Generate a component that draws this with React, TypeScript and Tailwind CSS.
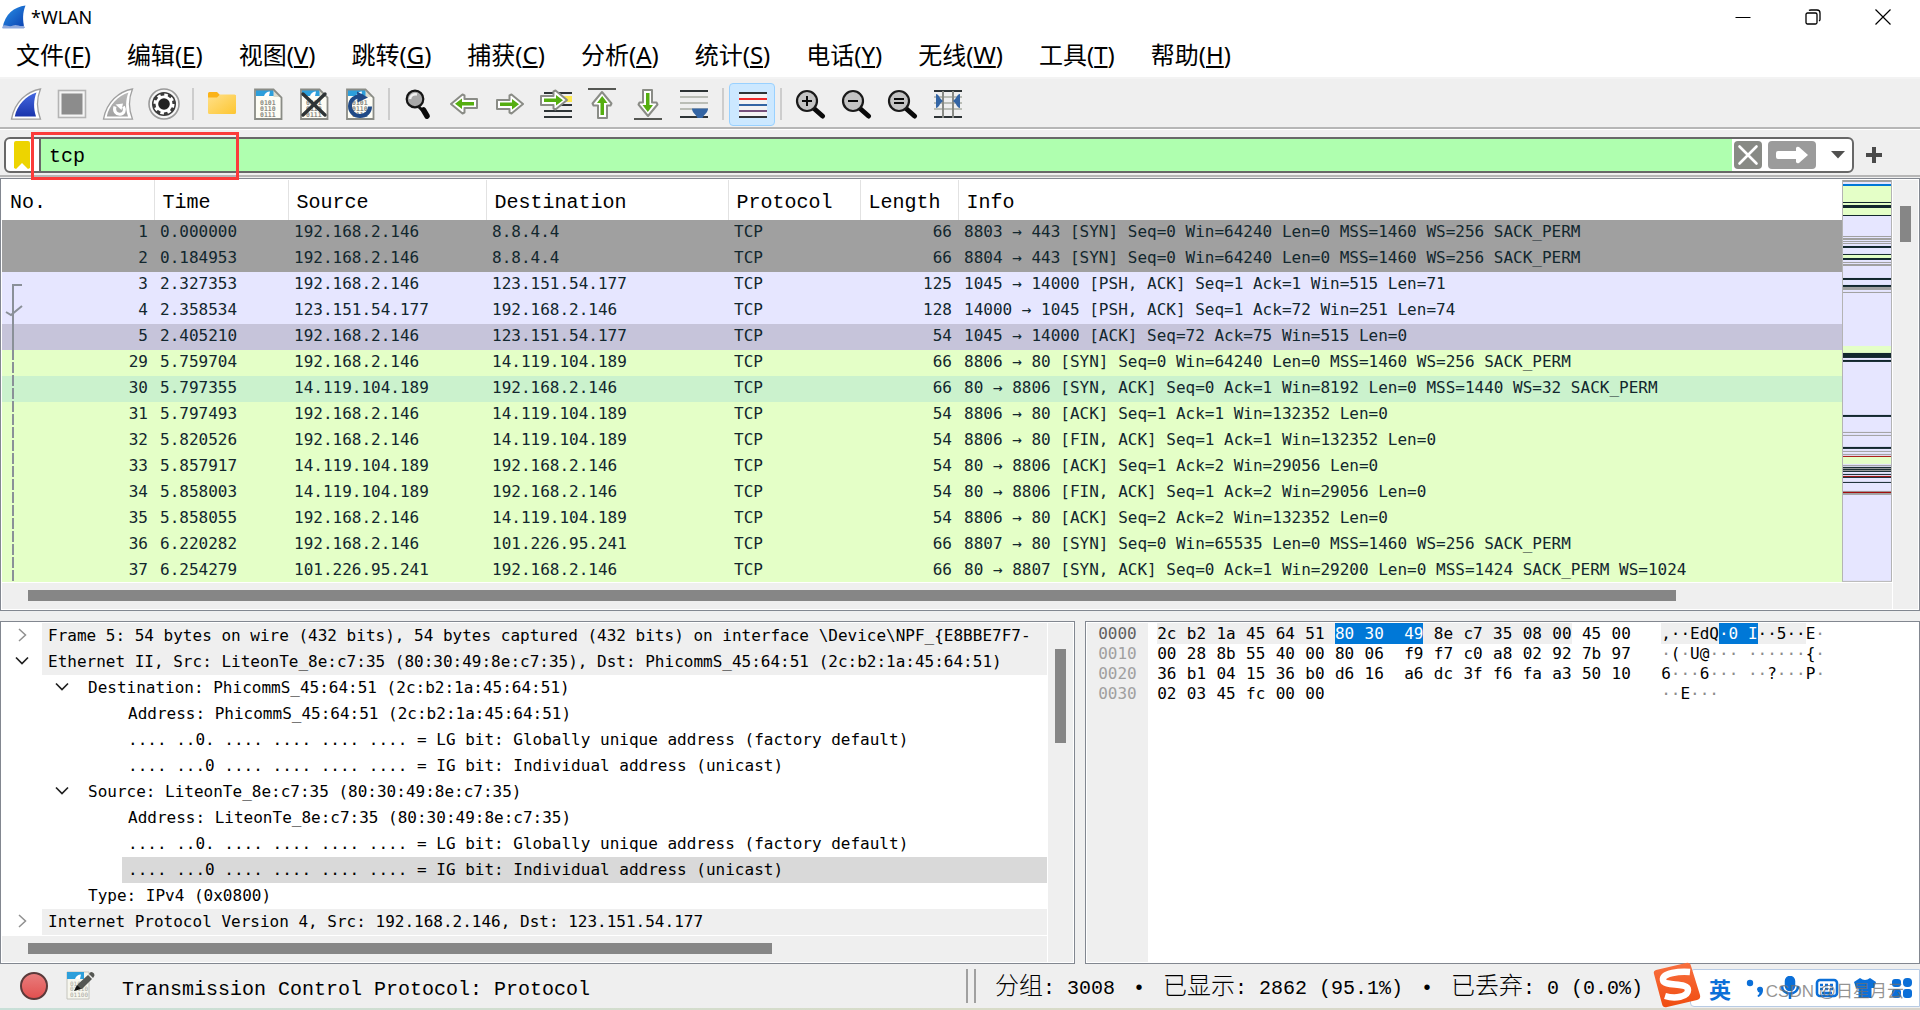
import React from 'react'

interface IPacket {
  no: number
  time: string
  src: string
  dst: string
  len: number
  info: string
  bg: string
}

interface IDetail {
  level: number
  text: string
  arrow?: 'open' | 'closed'
  bg?: string
}

const GRAY = 'bg-[#a0a0a0]'
const UDP = 'bg-[#e6e6ff]'
const GREEN = 'bg-[#e4ffc7]'

const menus = [
  ['文件', 'F'],
  ['编辑', 'E'],
  ['视图', 'V'],
  ['跳转', 'G'],
  ['捕获', 'C'],
  ['分析', 'A'],
  ['统计', 'S'],
  ['电话', 'Y'],
  ['无线', 'W'],
  ['工具', 'T'],
  ['帮助', 'H'],
]

const packets: IPacket[] = [
  { no: 1, time: '0.000000', src: '192.168.2.146', dst: '8.8.4.4', len: 66, info: '8803 → 443 [SYN] Seq=0 Win=64240 Len=0 MSS=1460 WS=256 SACK_PERM', bg: GRAY },
  { no: 2, time: '0.184953', src: '192.168.2.146', dst: '8.8.4.4', len: 66, info: '8804 → 443 [SYN] Seq=0 Win=64240 Len=0 MSS=1460 WS=256 SACK_PERM', bg: GRAY },
  { no: 3, time: '2.327353', src: '192.168.2.146', dst: '123.151.54.177', len: 125, info: '1045 → 14000 [PSH, ACK] Seq=1 Ack=1 Win=515 Len=71', bg: UDP },
  { no: 4, time: '2.358534', src: '123.151.54.177', dst: '192.168.2.146', len: 128, info: '14000 → 1045 [PSH, ACK] Seq=1 Ack=72 Win=251 Len=74', bg: UDP },
  { no: 5, time: '2.405210', src: '192.168.2.146', dst: '123.151.54.177', len: 54, info: '1045 → 14000 [ACK] Seq=72 Ack=75 Win=515 Len=0', bg: 'bg-[#c6c4da]' },
  { no: 29, time: '5.759704', src: '192.168.2.146', dst: '14.119.104.189', len: 66, info: '8806 → 80 [SYN] Seq=0 Win=64240 Len=0 MSS=1460 WS=256 SACK_PERM', bg: GREEN },
  { no: 30, time: '5.797355', src: '14.119.104.189', dst: '192.168.2.146', len: 66, info: '80 → 8806 [SYN, ACK] Seq=0 Ack=1 Win=8192 Len=0 MSS=1440 WS=32 SACK_PERM', bg: 'bg-[#cbf2cd]' },
  { no: 31, time: '5.797493', src: '192.168.2.146', dst: '14.119.104.189', len: 54, info: '8806 → 80 [ACK] Seq=1 Ack=1 Win=132352 Len=0', bg: GREEN },
  { no: 32, time: '5.820526', src: '192.168.2.146', dst: '14.119.104.189', len: 54, info: '8806 → 80 [FIN, ACK] Seq=1 Ack=1 Win=132352 Len=0', bg: GREEN },
  { no: 33, time: '5.857917', src: '14.119.104.189', dst: '192.168.2.146', len: 54, info: '80 → 8806 [ACK] Seq=1 Ack=2 Win=29056 Len=0', bg: GREEN },
  { no: 34, time: '5.858003', src: '14.119.104.189', dst: '192.168.2.146', len: 54, info: '80 → 8806 [FIN, ACK] Seq=1 Ack=2 Win=29056 Len=0', bg: GREEN },
  { no: 35, time: '5.858055', src: '192.168.2.146', dst: '14.119.104.189', len: 54, info: '8806 → 80 [ACK] Seq=2 Ack=2 Win=132352 Len=0', bg: GREEN },
  { no: 36, time: '6.220282', src: '192.168.2.146', dst: '101.226.95.241', len: 66, info: '8807 → 80 [SYN] Seq=0 Win=65535 Len=0 MSS=1460 WS=256 SACK_PERM', bg: GREEN },
  { no: 37, time: '6.254279', src: '101.226.95.241', dst: '192.168.2.146', len: 66, info: '80 → 8807 [SYN, ACK] Seq=0 Ack=1 Win=29200 Len=0 MSS=1424 SACK_PERM WS=1024', bg: GREEN },
]

const details: IDetail[] = [
  { level: 0, arrow: 'closed', bg: 'bg-[#efefef]', text: 'Frame 5: 54 bytes on wire (432 bits), 54 bytes captured (432 bits) on interface \\Device\\NPF_{E8BBE7F7-' },
  { level: 0, arrow: 'open', bg: 'bg-[#efefef]', text: 'Ethernet II, Src: LiteonTe_8e:c7:35 (80:30:49:8e:c7:35), Dst: PhicommS_45:64:51 (2c:b2:1a:45:64:51)' },
  { level: 1, arrow: 'open', text: 'Destination: PhicommS_45:64:51 (2c:b2:1a:45:64:51)' },
  { level: 2, text: 'Address: PhicommS_45:64:51 (2c:b2:1a:45:64:51)' },
  { level: 2, text: '.... ..0. .... .... .... .... = LG bit: Globally unique address (factory default)' },
  { level: 2, text: '.... ...0 .... .... .... .... = IG bit: Individual address (unicast)' },
  { level: 1, arrow: 'open', text: 'Source: LiteonTe_8e:c7:35 (80:30:49:8e:c7:35)' },
  { level: 2, text: 'Address: LiteonTe_8e:c7:35 (80:30:49:8e:c7:35)' },
  { level: 2, text: '.... ..0. .... .... .... .... = LG bit: Globally unique address (factory default)' },
  { level: 2, bg: 'bg-[#d9d9d9]', text: '.... ...0 .... .... .... .... = IG bit: Individual address (unicast)' },
  { level: 1, text: 'Type: IPv4 (0x0800)' },
  { level: 0, arrow: 'closed', bg: 'bg-[#efefef]', text: 'Internet Protocol Version 4, Src: 192.168.2.146, Dst: 123.151.54.177' },
]

const hexRows = [
  { offset: '0000', bytes: '2c b2 1a 45 64 51 80 30 49 8e c7 35 08 00 45 00', ascii: ',··EdQ·0 I··5··E·' },
  { offset: '0010', bytes: '00 28 8b 55 40 00 80 06 f9 f7 c0 a8 02 92 7b 97', ascii: '·(·U@··· ······{·' },
  { offset: '0020', bytes: '36 b1 04 15 36 b0 d6 16 a6 dc 3f f6 fa a3 50 10', ascii: '6···6··· ··?···P·' },
  { offset: '0030', bytes: '02 03 45 fc 00 00', ascii: '··E···' },
]

// [y, height, color]
const bands: [number, number, string][] = [
  [0, 2, '#a0a0a0'], [4, 2, '#0078d7'], [6, 30, '#e4ffc7'], [22, 1, '#12272e'], [25, 3, '#12272e'], [35, 1, '#12272e'],
  [56, 1, '#a0a0a0'], [58, 2, '#a0a0a0'], [61, 1, '#a0a0a0'], [63, 1, '#a0a0a0'], [66, 2, '#12272e'], [74, 1, '#12272e'],
  [75, 3, '#e4ffc7'], [78, 2, '#12272e'], [82, 1, '#a0a0a0'], [84, 2, '#a0a0a0'], [98, 2, '#12272e'], [105, 2, '#12272e'],
  [107, 3, '#a0a0a0'], [112, 1, '#a0a0a0'], [166, 7, '#e4ffc7'], [173, 5, '#12272e'], [180, 2, '#12272e'],
  [235, 2, '#12272e'], [252, 1, '#a0a0a0'], [255, 1, '#a0a0a0'], [267, 2, '#12272e'], [271, 1, '#a0a0a0'], [274, 1, '#a0a0a0'],
  [276, 1, '#a40000'], [277, 7, '#e4ffc7'], [285, 1, '#a0a0a0'], [287, 5, '#a0a0a0'], [287, 1, '#12272e'], [289, 1, '#12272e'],
  [291, 1, '#12272e'], [294, 1, '#12272e'], [296, 1, '#a40000'], [297, 1, '#12272e'], [302, 1, '#12272e'],
  [311, 4, '#a0a0a0'], [312, 1, '#a40000'],
]

const Icon = ({ children }: { children: React.ReactNode }) => (
  <svg viewBox="0 0 32 32" className="h-8 w-8" fill="none" aria-hidden="true">
    {children}
  </svg>
)

const Fin = ({ from, to }: { from: string; to: string }) => (
  <>
    <linearGradient id={'fin' + from.slice(1)} x1="0" y1="0" x2="0" y2="1">
      <stop offset="0" stopColor={from} />
      <stop offset="1" stopColor={to} />
    </linearGradient>
    <path d="M30.500 1C17 3.500 4.500 14 1.500 31.200H30.500C26.500 21 26.800 10 30.500 1Z" fill="#fff" stroke="#a0a0a0" strokeWidth="1.300" />
    <path d="M26.500 4.500C16 8 7 17 4.800 28.500H26C23.300 20 23.500 12 26.500 4.500Z" fill={`url(#fin${from.slice(1)})`} />
  </>
)

const Doc = ({ children }: { children?: React.ReactNode }) => (
  <>
    <path d="M3 1.500H22L29.500 9V31H3Z" fill="#fdfdf5" />
    <path d="M4 2H21L25 8H4Z" fill="#2d9fdb" />
    <path d="M12 8C13 5 15 3.500 18 3.500L17 8Z" fill="#fff" />
    <path d="M21.500 2V9H29Z" fill="#dcdccf" />
    <g fill="#8a8a82" fontFamily="'DejaVu Sans Mono', monospace" fontSize="6.500" fontWeight="bold">
      <text x="8" y="16.500">0101</text>
      <text x="8" y="22.500">0110</text>
      <text x="8" y="28.500">0111</text>
    </g>
    <path d="M3 1.500H21.500L29.500 9.500V31H3Z" stroke="#8a8c86" strokeWidth="1.800" />
    {children}
  </>
)

const Lens = ({ children }: { children?: React.ReactNode }) => (
  <>
    <path d="M20 20.500L28.500 28" stroke="#0a0a0a" strokeWidth="5" strokeLinecap="round" />
    <circle cx="13" cy="13" r="10" fill="#c4c4c4" stroke="#1a1a1a" strokeWidth="2.200" />
    <g stroke="#0a0a0a" strokeWidth="2">{children}</g>
  </>
)

// right pointing arrow, the other directions are rotations of it
const arrowBody = (
  <>
    <path d="M3 12H15.500V7.500L17.500 6.500L29 16L17.500 25.500L15.500 24.500V21H3Z" fill="#fff" stroke="#8a8c86" strokeWidth="2" strokeLinejoin="round" />
    <path d="M6 14.500H18V11L25 16.200L18 21.500V18H6Z" fill="#55ae10" />
  </>
)

const lines = (rows: [number, string][]) =>
  rows.map(([y, color]) => <path key={y} d={`M2 ${y}H30`} stroke={color} strokeWidth="2" />)

const tools: { name: string; active?: boolean; icon: React.ReactNode }[][] = [
  [
    { name: '开始捕获', icon: <Fin from="#4468e0" to="#1a34ac" /> },
    {
      name: '停止捕获',
      icon: (
        <>
          <rect x="2.500" y="2.500" width="27" height="27" fill="#f4f4f4" stroke="#b4b4b4" strokeWidth="1.600" />
          <rect x="5.500" y="5.500" width="21" height="21" fill="#8c8c8c" />
        </>
      ),
    },
    {
      name: '重新开始捕获',
      icon: (
        <>
          <Fin from="#b9b9b9" to="#a2a2a2" />
          <path d="M13 18.500C11.500 23 14 26.500 18 26.300C22 26 23.500 22 21.500 18.500" stroke="#fff" strokeWidth="3" />
          <path d="M13.500 16.500L21 15.500L19.500 22Z" fill="#fff" />
        </>
      ),
    },
    {
      name: '捕获选项',
      icon: (
        <>
          <circle cx="16" cy="16" r="15" fill="#f6f6f6" stroke="#9a9a9a" strokeWidth="1.600" />
          <circle cx="16" cy="16" r="12" fill="#3a3a3a" />
          <circle cx="16" cy="16" r="8.500" fill="#fff" />
          <circle cx="16" cy="16" r="9" stroke="#fff" strokeWidth="3" strokeDasharray="3.500 3.570" />
          <circle cx="16" cy="16" r="5.800" fill="#222" />
        </>
      ),
    },
  ],
  [
    {
      name: '打开',
      icon: (
        <>
          <linearGradient id="folder" x1="0" y1="0" x2="1" y2="1">
            <stop offset="0" stopColor="#ffe08a" />
            <stop offset="1" stopColor="#fdc631" />
          </linearGradient>
          <path d="M2 5.500Q2 4 3.500 4H11L14 7H28.500Q30 7 30 8.500V14H2Z" fill="#fbb318" />
          <path d="M2 9.500H11L14 6.500H28.500Q30 6.500 30 8V24.500Q30 26 28.500 26H3.500Q2 26 2 24.500Z" fill="url(#folder)" />
        </>
      ),
    },
    { name: '保存', icon: <Doc /> },
    { name: '关闭文件', icon: <Doc><path d="M5 6L27 27M27 6L5 27" stroke="#2e3436" strokeWidth="3.400" strokeLinecap="round" /></Doc> },
    {
      name: '重新加载',
      icon: (
        <Doc>
          <path d="M19 8.500C11 7 6 12 6 18C6 24 10.500 28 16 28C22 28 26 24 26 18.500" stroke="#204a87" strokeWidth="4" />
          <path d="M13 3.500L24 9.500L13.500 14.500Z" fill="#204a87" />
        </Doc>
      ),
    },
  ],
  [
    {
      name: '查找',
      icon: (
        <>
          <path d="M17 19L20 22" stroke="#111" strokeWidth="3" />
          <path d="M21.500 22L25 28" stroke="#0a0a0a" strokeWidth="5.500" strokeLinecap="round" />
          <circle cx="13" cy="11" r="8.300" fill="#a8a8a8" stroke="#151515" strokeWidth="2.200" />
          <path d="M8 11C8.500 7.500 11.500 5.500 15 6.500" stroke="#f0f0f0" strokeWidth="2.500" />
        </>
      ),
    },
    { name: '上一分组', icon: <g transform="rotate(180 16 16)">{arrowBody}</g> },
    { name: '下一分组', icon: arrowBody },
    {
      name: '转到分组',
      icon: (
        <>
          <rect x="23" y="8" width="9" height="6" fill="#fce94f" />
          <g transform="translate(2 0)">{lines([[5, '#2e3436'], [17, '#2e3436'], [23, '#2e3436'], [29, '#2e3436']])}</g>
          <g transform="translate(-2 -4)">{arrowBody}</g>
        </>
      ),
    },
    {
      name: '首个分组',
      icon: (
        <>
          {lines([[1, '#555753']])}
          <g transform="translate(0 1) rotate(-90 16 16)">{arrowBody}</g>
        </>
      ),
    },
    {
      name: '最新分组',
      icon: (
        <>
          {lines([[31, '#555753']])}
          <g transform="translate(0 -1) rotate(90 16 16)">{arrowBody}</g>
        </>
      ),
    },
    {
      name: '自动滚动',
      icon: (
        <>
          {lines([[3, '#2e3436'], [9, '#babdb6'], [15, '#babdb6'], [21, '#babdb6'], [29, '#2e3436']])}
          <path d="M14 20.500H30C30 25 26 26 24.500 30H19.500C18 26 14 25 14 20.500Z" fill="#3465a4" />
        </>
      ),
    },
  ],
  [
    {
      name: '着色',
      active: true,
      icon: (
        <>
          <rect x="3" y="4" width="28" height="26" fill="#f3f3f3" />
          <g transform="translate(1 0)">{lines([[5, '#2e3436'], [11, '#ef2929'], [17, '#3465a4'], [23, '#75507b'], [29, '#2e3436']])}</g>
        </>
      ),
    },
  ],
  [
    { name: '放大', icon: <Lens><path d="M8 13H18M13 8V18" /></Lens> },
    { name: '缩小', icon: <Lens><path d="M8 13H18" /></Lens> },
    { name: '正常大小', icon: <Lens><path d="M8 11H18M8 15H18" /></Lens> },
    {
      name: '调整列宽',
      icon: (
        <>
          {lines([[3, '#2e3436'], [9, '#babdb6'], [15, '#babdb6'], [21, '#babdb6'], [29, '#2e3436']])}
          <path d="M11 3V30M21 3V30" stroke="#888a85" strokeWidth="2" />
          <path d="M4 6C7 6 7 10 11 13C7 16 7 20 4 20ZM28 6C25 6 25 10 21 13C25 16 25 20 28 20Z" fill="#3465a4" />
        </>
      ),
    },
  ],
]

function TitleBar() {
  return (
    <header className="flex h-[34px] shrink-0 items-center bg-white pr-0.5 pl-0.5">
      <svg viewBox="0 0 24 24" className="h-6 w-6" aria-hidden="true">
        <linearGradient id="logo" x1="0" y1="0" x2="1" y2="1">
          <stop offset="0" stopColor="#2a93e8" />
          <stop offset="1" stopColor="#0a3fb0" />
        </linearGradient>
        <path d="M23.500 0.500C12 2 3 9 0.500 23H22.500C20.500 15 20.500 8 23.500 0.500Z" fill="url(#logo)" />
        <path d="M1 20.500C5 19.500 7 22.500 11 20.500S18 22.500 22 20.500V23.500H0.500Z" fill="#8fa9dd" />
      </svg>
      <h1 className="ml-[5px] text-lg leading-6">*WLAN</h1>
      <div className="ml-auto flex">
        <button aria-label="最小化" className="flex h-8 w-[70px] items-center justify-center">
          <svg viewBox="0 0 16 16" className="h-4 w-4" stroke="#000"><path d="M0.500 8.500H15.500" /></svg>
        </button>
        <button aria-label="还原" className="flex h-8 w-[70px] items-center justify-center">
          <svg viewBox="0 0 16 16" className="h-4 w-4" fill="none" stroke="#000" strokeWidth="1.300">
            <rect x="1" y="4" width="11" height="11" rx="1.500" />
            <path d="M4 1.500C4.500 1 5 1 6 1H12Q15 1 15 4V10.500Q15 11.500 14 12" />
          </svg>
        </button>
        <button aria-label="关闭" className="flex h-8 w-[70px] items-center justify-center">
          <svg viewBox="0 0 16 16" className="h-4 w-4" stroke="#000" strokeWidth="1.200"><path d="M0.500 0.500L15.500 15.500M15.500 0.500L0.500 15.500" /></svg>
        </button>
      </div>
    </header>
  )
}

function ToolBar() {
  return (
    <div className="flex h-[50px] shrink-0 items-center border-b-2 border-[#b6b6b6] pt-0.5 pl-[3px]">
      {tools.map((group, i) => (
        <React.Fragment key={i}>
          {i > 0 && <div className="flex h-8 w-3 justify-center"><div className="w-0.5 bg-[#cdcdcd]" /></div>}
          {group.map(({ name, active, icon }) => (
            <button
              key={name}
              aria-label={name}
              className={`flex h-[43px] w-[46px] items-center justify-center ${active ? 'rounded-sm border border-[#99d1ff] bg-[#cce8ff]' : ''}`}
            >
              <Icon>{icon}</Icon>
            </button>
          ))}
        </React.Fragment>
      ))}
    </div>
  )
}

function FilterBar() {
  return (
    <div className="relative flex h-12 shrink-0 items-center border-t border-b-2 border-t-white border-b-[#b6b6b6] pt-1 pr-[66px] pl-1">
      <div className="flex h-9 flex-1 items-center overflow-hidden rounded-md border-2 border-[#686868] bg-white">
        <button aria-label="书签" className="flex h-full w-[35px] items-center border-r-2 border-[#686868] pl-2">
          <svg viewBox="0 0 16 28" className="h-7 w-4"><path d="M0 2Q0 0 2 0H14Q16 0 16 2V27L14 28L8 22L2 28L0 27Z" fill="#edd400" /></svg>
        </button>
        <input
          aria-label="显示过滤器"
          defaultValue="tcp"
          className="h-full min-w-0 flex-1 bg-[#afffaf] px-2 pt-1 font-['Liberation_Mono','Noto_Sans_CJK_SC',monospace] text-xl outline-none"
        />
        <button aria-label="清除" className="ml-0.5 flex h-7 w-7 items-center justify-center rounded-sm bg-[#888a85]">
          <svg viewBox="0 0 28 28" className="h-7 w-7" stroke="#fff" strokeWidth="2.600" strokeLinecap="round"><path d="M5.500 5.500L22.500 22.500M22.500 5.500L5.500 22.500" /></svg>
        </button>
        <button aria-label="应用" className="ml-1.5 flex h-7 w-12 items-center justify-center rounded-sm bg-[#9b9b9b]">
          <svg viewBox="0 0 32 18" className="h-[18px] w-8" fill="#fff"><path d="M2 5H20V2Q21 0 23 1L32 9L23 17Q21 18 20 16V13H2Q0 13 0 11V7Q0 5 2 5Z" /></svg>
        </button>
        <button aria-label="历史" className="flex h-full w-9 items-center justify-center pl-2">
          <svg viewBox="0 0 14 8" className="h-2 w-3.5" fill="#50504f"><path d="M0 0H14L7 7.500Z" /></svg>
        </button>
      </div>
      <button aria-label="添加" className="absolute right-[38px] flex h-9 w-4 items-center justify-center">
        <svg viewBox="0 0 16 16" className="h-4 w-4" fill="#4a4a4a"><path d="M6 0H10V6H16V10H10V16H6V10H0V6H6Z" /></svg>
      </button>
      <div className="pointer-events-none absolute top-0.5 left-[31px] z-10 h-12 w-52 border-3 border-[#fb3b3a]" />
    </div>
  )
}

function PacketList() {
  return (
    <section className="flex min-h-0 flex-5 border border-[#828790] bg-white p-px">
      <div className="flex min-w-0 flex-1 flex-col">
        <div className="flex min-h-0 flex-1">
          <div className="relative min-w-0 flex-1 overflow-hidden">
            <table className="w-full table-fixed border-collapse text-left whitespace-pre text-[#12272e]">
              <thead>
                <tr className="h-10 font-['Liberation_Mono',monospace] text-xl text-black *:border-r *:border-[#e2e2e2] *:px-2 *:pt-1.5 *:pb-0 *:font-normal *:last:border-0">
                  <th className="w-[152px]">No.</th>
                  <th className="w-[134px]">Time</th>
                  <th className="w-[198px]">Source</th>
                  <th className="w-[242px]">Destination</th>
                  <th className="w-[132px]">Protocol</th>
                  <th className="w-[98px]">Length</th>
                  <th>Info</th>
                </tr>
              </thead>
              <tbody className="font-['DejaVu_Sans_Mono',monospace] text-base">
                {packets.map(({ no, time, src, dst, len, info, bg }) => (
                  <tr key={no} className={`h-[26px] *:px-1.5 *:pt-0 *:pb-0.5 *:leading-6 ${bg}`}>
                    <td className="text-right">{no}</td>
                    <td>{time}</td>
                    <td>{src}</td>
                    <td>{dst}</td>
                    <td>TCP</td>
                    <td className="text-right">{len}</td>
                    <td className="overflow-hidden">{info}</td>
                  </tr>
                ))}
              </tbody>
            </table>
            {/* conversation marks of the selected packet */}
            <svg viewBox="0 0 24 404" className="pointer-events-none absolute top-0 left-0 h-[404px] w-6" fill="none" stroke="#8a9098" strokeWidth="2">
              <path d="M20 105H11V170" />
              <path d="M4 132L9 135L20 126" />
              <path d="M11 169V404" strokeDasharray="11 2" />
            </svg>
          </div>
          <svg viewBox="0 0 50 402" preserveAspectRatio="none" className="h-full w-[50px]" aria-hidden="true">
            <rect width="50" height="402" fill="#b4b4b4" />
            <rect x="1" width="48" height="401" fill="#e6e6ff" />
            {bands.map(([y, h, color], i) => (
              <rect key={i} x="1" y={y} width="48" height={h} fill={color} />
            ))}
          </svg>
        </div>
        <div className="mt-px h-[26px] bg-[#efefef] pt-[7px] pr-[216px] pl-[26px]">
          <div className="h-[11px] bg-[#868686]" />
        </div>
      </div>
      <div className="ml-px w-[25px] bg-[#efefef] pt-[26px] pl-[7px]">
        <div className="h-9 w-[11px] bg-[#868686]" />
      </div>
    </section>
  )
}

function DetailPane() {
  return (
    <section className="flex w-[56%] border border-[#828790] bg-white p-px">
      <div className="flex min-w-0 flex-1 flex-col">
        <ul className="min-h-0 flex-1 overflow-hidden font-['DejaVu_Sans_Mono',monospace] text-base whitespace-pre">
          {details.map(({ level, text, arrow, bg = '' }, i) => (
            <li key={i} className={`flex h-[26px] ${['', 'pl-10', 'pl-20'][level]}`}>
              <button aria-label="展开" disabled={!arrow} className="flex w-10 shrink-0 items-center justify-center pb-px">
                {arrow === 'closed' && <svg viewBox="0 0 14 14" className="h-3.5 w-3.5" fill="none" stroke="#909090" strokeWidth="1.500"><path d="M4 1L10.500 7L4 13" /></svg>}
                {arrow === 'open' && <svg viewBox="0 0 14 14" className="h-3.5 w-3.5" fill="none" stroke="#202020" strokeWidth="1.700"><path d="M1 3.500L7 9.500L13 3.500" /></svg>}
              </button>
              <span className={`min-w-0 flex-1 overflow-hidden pl-1.5 leading-[26px] ${bg}`}>{text}</span>
            </li>
          ))}
        </ul>
        <div className="mt-px h-[26px] bg-[#efefef] pt-[7px] pl-[26px]">
          <div className="h-[11px] w-[73%] bg-[#868686]" />
        </div>
      </div>
      <div className="ml-px w-[25px] bg-[#efefef] pt-[26px] pl-[7px]">
        <div className="h-[94px] w-[11px] bg-[#868686]" />
      </div>
    </section>
  )
}

// bytes 6-8 are selected, 0-13 belong to the Ethernet header
function Byte({ value, row, index }: { value: string; row: number; index: number }) {
  if (row > 0 || index > 13) return <span>{value}</span>
  if (index === 6 || index === 7) return <span className="bg-[#0078d7] text-white">{value}</span>
  if (index === 8) return <span className="bg-[#efefef]"><span className="inline-block bg-[#0078d7] text-white">{value}</span></span>
  if (index === 13) return <span><span className="inline-block bg-[#efefef]">{value}</span></span>
  return <span className="bg-[#efefef]">{value}</span>
}

const dots = (s: string) =>
  s.split(/(·+)/).map((part, i) => (part[0] === '·' ? <span key={i} className="text-[#8c8c8c]">{part}</span> : part))

function BytesPane() {
  return (
    <section className="flex min-w-0 flex-1 border border-[#828790] bg-white p-px font-['DejaVu_Sans_Mono',monospace] text-base leading-5 whitespace-pre">
      <div className="w-[61px] bg-[#efefef] pt-px pl-[11px] text-[#a0a0a0]">
        {hexRows.map((r, i) => (
          <div key={r.offset} className={i === 0 ? 'text-[#606060]' : ''}>{r.offset}</div>
        ))}
      </div>
      <div className="pl-[9px]">
        {hexRows.map((r, row) => {
          const bytes = r.bytes.split(' ')
          return (
            <div key={r.offset} className={`flex ${row === 0 ? 'h-[21px] leading-[21px]' : 'h-5'}`}>
              <div className="grid w-[237px] grid-cols-8">
                {bytes.slice(0, 8).map((b, i) => <Byte key={i} value={b} row={row} index={i} />)}
              </div>
              <div className={`w-2.5 ${row === 0 ? 'bg-[#0078d7]' : ''}`} />
              <div className="grid w-[237px] grid-cols-8">
                {bytes.slice(8).map((b, i) => <Byte key={i} value={b} row={row} index={i + 8} />)}
              </div>
            </div>
          )
        })}
      </div>
      <div className="pl-5">
        <div className="flex h-[21px] leading-[21px]">
          <span className="bg-[#efefef]">,··EdQ</span>
          <span className="bg-[#0078d7] text-white">·0 I</span>
          <span className="bg-[#efefef]">··5··</span>
          <span>E</span>
          <span className="text-[#8c8c8c]">·</span>
        </div>
        {hexRows.slice(1).map((r) => (
          <div key={r.offset}>{dots(r.ascii)}</div>
        ))}
      </div>
    </section>
  )
}

const Zh = ({ children }: { children: React.ReactNode }) => (
  <span className="font-['Noto_Sans_CJK_SC',sans-serif] text-2xl leading-8 font-light">{children}</span>
)

const Dot = () => <span className="inline-block w-6 text-center">•</span>

function StatusBar() {
  return (
    <footer className="relative flex h-[46px] shrink-0 flex-col font-['Liberation_Mono','Noto_Sans_CJK_SC',monospace] text-xl whitespace-pre">
      <div className="flex min-h-0 flex-1 items-center pl-5">
        <button aria-label="专家信息" className="h-7 w-7 rounded-full border-2 border-[#5a3a3a] bg-linear-to-b from-[#e87c7c] to-[#e25050]" />
        <button aria-label="注释" className="ml-[18px]">
          <svg viewBox="0 0 30 30" className="h-[30px] w-[30px]" aria-hidden="true">
            <path d="M1 1H23V28H1Z" fill="#f6f6ee" stroke="#c4c4bc" />
            <path d="M1 1H18V8H1Z" fill="#2d9fdb" />
            <path d="M9 8C10 5 12 3.500 15 3.500L14 8Z" fill="#fff" />
            <g fill="#a8a8a0" fontSize="6" fontFamily="'DejaVu Sans Mono', monospace">
              <text x="4" y="15">0101</text>
              <text x="4" y="20">01110</text>
              <text x="4" y="26">01100</text>
            </g>
            <path d="M10 18L12 13L22 4L26 8L16 18Z" fill="#555753" />
            <path d="M23 3L24 1.500Q26 0 28 2.500Q29 4.500 28 5.500L27 7Z" fill="#555753" />
            <path d="M8 20L11 14L15 18Z" fill="#111" />
          </svg>
        </button>
        <p className="ml-[26px] flex-1 pt-2">Transmission Control Protocol: Protocol</p>
        <div className="mr-[19px] flex h-[34px] w-2.5 justify-between border-x-2 border-[#a0a0a0]" />
        <p className="w-[925px] pt-1 leading-10">
          <Zh>分组</Zh>: 3008 <Dot /> <Zh>已显示</Zh>: 2862 (95.1%) <Dot /> <Zh>已丢弃</Zh>: 0 (0.0%)
        </p>
      </div>
      <div className="h-0.5 bg-linear-to-r from-[#c8e0d8] via-[#d8dcc8] to-[#d8d4cc]" />

      {/* input method bar floating over the corner */}
      <div className="absolute right-0 bottom-[3px] flex h-[38px] w-[230px] items-center rounded-l-sm border border-[#b8cbe4] bg-white pr-[7px] pl-[18px] text-[#0b6fd8]">
        <div className="flex flex-1 items-center justify-between">
          <span className="font-['Noto_Sans_CJK_SC',sans-serif] text-[22px] leading-8 font-bold">英</span>
          <svg viewBox="0 0 20 22" className="h-[22px] w-5" fill="currentColor"><circle cx="4" cy="6" r="3.200" /><path d="M11 12.500A3 3 0 1 1 17 13C17 17 14.500 19.500 12 20L11.500 18.500Q13.500 17.500 13.500 15.500Q11.500 15 11 12.500Z" /></svg>
          <svg viewBox="0 0 20 24" className="h-6 w-5" fill="none" stroke="currentColor" strokeWidth="2.500"><rect x="6" y="1" width="8" height="13" rx="4" fill="currentColor" /><path d="M2 10C2 20 18 20 18 10M10 17V23" /></svg>
          <svg viewBox="0 0 24 20" className="h-5 w-6" fill="none" stroke="currentColor" strokeWidth="2.600"><rect x="2" y="2" width="20" height="16" rx="3" /><path d="M5 7H19M5 11H19" strokeDasharray="3 2" /><path d="M7 15H17" /></svg>
          <svg viewBox="0 0 24 22" className="h-[22px] w-6" fill="currentColor"><path d="M7 1Q12 5 17 1L23 5L21 11H18.500V21H5.500V11H3L1 5Z" /></svg>
          <svg viewBox="0 0 20 20" className="h-5 w-5" fill="currentColor"><rect x="0" y="1" width="9" height="8" rx="3" /><rect x="11" y="0" width="9" height="9" rx="4" /><rect x="0" y="11" width="9" height="9" rx="3" /><rect x="11" y="11" width="9" height="9" rx="3" /></svg>
        </div>
      </div>
      <svg viewBox="0 0 48 46" className="absolute right-[219px] bottom-0.5 h-[46px] w-12 overflow-visible" aria-hidden="true">
        <linearGradient id="sogou" x1="0" y1="0" x2="0" y2="1">
          <stop offset="0" stopColor="#f87040" />
          <stop offset="1" stopColor="#f04c10" />
        </linearGradient>
        <path d="M3 8L33 1Q37 0 38 4L47 33Q48 37 44 38L14 45Q10 46 9 42L1 12Q0 9 3 8Z" fill="url(#sogou)" />
        <path d="M37 10C27 9 9 11 10 18C11 25 35 20 35 28C35 35 22 37 12 34" fill="none" stroke="#fff" strokeWidth="6.500" />
      </svg>
      <span className="absolute right-4 bottom-1.5 font-['Liberation_Sans','Noto_Sans_CJK_SC',sans-serif] text-[17px] leading-6 text-[#707070]/75">CSDN @日星月云</span>
    </footer>
  )
}

export default function App() {
  return (
    <div className="flex h-screen flex-col overflow-hidden bg-[#efefef] font-['Noto_Sans','Noto_Sans_CJK_SC',sans-serif] text-black">
      <TitleBar />
      <nav className="flex h-[45px] shrink-0 items-center gap-9 border-b-2 border-[#f3f3f3] bg-white pl-4 text-2xl">
        {menus.map(([name, key]) => (
          <button key={key} className="pb-0.5 leading-10 whitespace-nowrap">
            {name}(<span className="underline decoration-2 underline-offset-2">{key}</span>)
          </button>
        ))}
      </nav>
      <ToolBar />
      <FilterBar />
      <div className="h-px shrink-0 bg-[#efefef]" />
      <main className="flex min-h-0 flex-1 flex-col gap-2.5">
        <PacketList />
        <div className="flex min-h-0 flex-4 gap-2.5">
          <DetailPane />
          <BytesPane />
        </div>
      </main>
      <StatusBar />
    </div>
  )
}
